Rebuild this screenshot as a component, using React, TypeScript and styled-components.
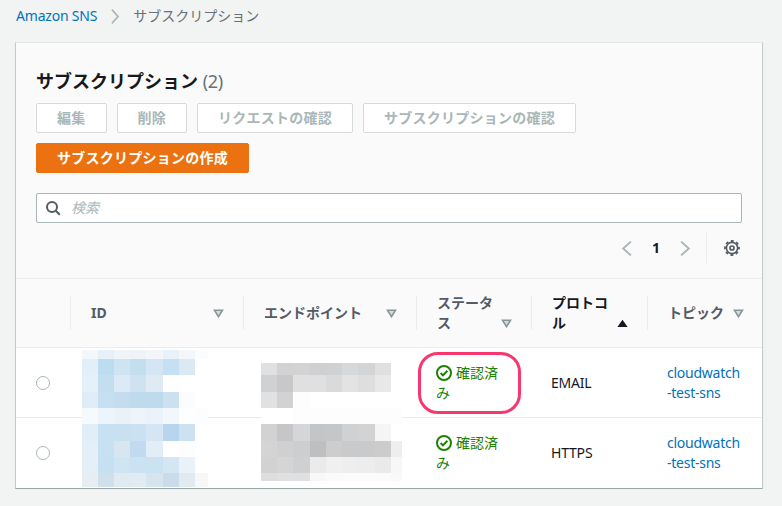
import { createGlobalStyle, styled } from 'styled-components'

const GlobalStyle = createGlobalStyle`
  html, body {
    margin: 0;
    padding: 0;
    background: #f2f3f3;
    font-family: "Noto Sans", "Noto Sans CJK JP", sans-serif;
    font-size: 14px;
    line-height: 20px;
    color: #16191f;
  }
`

const blueX = [82, 98, 114, 130, 146, 163, 179, 195, 208]
const blueRows = [
  { y: 350, h: 9, c: ['#f3f7fb', '#e8f0f7', '#eef4f8', '#edf3f7', '#f2f6fa', '#e8f1f8', '#f3f7fb', '#fbfcfd'] },
  { y: 359, h: 16, c: ['#e3eff8', '#bedcef', '#cfe4f2', '#c3deef', '#d4e5f3', '#c5e0f2', '#dbe9f4', '#fff'] },
  { y: 375, h: 17, c: ['#e6f0f8', '#c3deee', '#dce9f6', '#cee2f0', '#deebf5', '#fff', '#fff', '#fff'] },
  { y: 392, h: 16, c: ['#e0ecf8', '#c6e0f1', '#c4dcee', '#bedaed', '#bedaed', '#cbe1f0', '#fbfcfe', '#fff'] },
  { y: 408, h: 16, c: ['#f7fafd', '#eef4fb', '#eaf2f8', '#eef4f9', '#ebf2f9', '#f3f7fb', '#fdfeff', '#fdfdfd'] },
  { y: 424, h: 17, c: ['#e2eef7', '#c8e1f2', '#c9e0f0', '#cae1f1', '#d5e5f3', '#b7d5ec', '#cde2f1', '#fff'] },
  { y: 441, h: 16, c: ['#e4eff7', '#c8e1f2', '#d8e6f1', '#c2daef', '#e1edf7', '#fff', '#fcfdfd', '#fff'] },
  { y: 457, h: 16, c: ['#e4eff7', '#c6e0f1', '#cfe5f4', '#cbe2f2', '#cbe2f1', '#d4e6f3', '#e9f2f9', '#fff'] },
  { y: 473, h: 14, c: ['#e6edf3', '#cfe0ec', '#e0eaf1', '#e0ebf2', '#d6e4ee', '#cadcea', '#e1eaf0', '#f7f7f7'] }
]

const greyX = [261, 277, 293, 310, 326, 342, 358, 375, 391, 402]
const greyRows = [
  { y: 363, h: 12, c: ['#dfe0e2', '#d2d2d2', '#d3d3d3', '#d0d0d2', '#d0d1d3', '#d7d8da', '#d3d4d6', '#e0e0e0', '#fff'] },
  { y: 375, h: 17, c: ['#d0d1d3', '#c8c8ca', '#e0e0e0', '#dfe0e2', '#dadada', '#e3e3e3', '#dedede', '#e8e8e8', '#fff'] },
  { y: 392, h: 16, c: ['#e0e1e3', '#d2d2d2', '#fdfdfd', '#fff', '#fff', '#fff', '#fff', '#fff', '#fff'] },
  { y: 408, h: 16, c: ['#fff', '#fff', '#fdfdfd', '#fdfdfd', '#fdfdfd', '#fdfdfd', '#fdfdfd', '#fdfdfd', '#fdfdfd'] },
  { y: 424, h: 17, c: ['#d2d2d2', '#c6c6c8', '#d5d6d8', '#c4c5c7', '#c5c6c8', '#d0d1d3', '#d3d3d3', '#f5f5f5', '#fff'] },
  { y: 441, h: 16, c: ['#d4d4d4', '#cfd0d2', '#cdcecf', '#bebfc1', '#cdcdcd', '#c9cacc', '#c9cacc', '#cccccc', '#eeeeee'] },
  { y: 457, h: 16, c: ['#d2d2d2', '#d5d5d5', '#cfd0d2', '#ebebeb', '#f0f0f0', '#eeeeee', '#ededed', '#eaeaea', '#f7f7f7'] },
  { y: 473, h: 8, c: ['#dcdee0', '#dfe1e0', '#dfe0e2', '#f8f8f8', '#fafafa', '#fbfbfb', '#fbfbfb', '#fbfbfb', '#f9f9f9'] }
]

// table body starts at y=348 in the page
const BODY_TOP = 348

type Row = { y: number; h: number; c: string[] }

const Mosaic = ({ xs, rows, $left }: { xs: number[]; rows: Row[]; $left: number }) => {
  const width = xs[xs.length - 1] - xs[0]
  const top = rows[0].y
  const bottom = rows[rows.length - 1].y + rows[rows.length - 1].h
  return (
    <MosaicSvg
      $left={$left}
      $top={top - BODY_TOP}
      width={width}
      height={bottom - top}
      viewBox={`${xs[0]} ${top} ${width} ${bottom - top}`}
      shapeRendering="crispEdges"
    >
      {rows.map((r) =>
        r.c.map((fill, i) => (
          <rect key={`${r.y}-${i}`} x={xs[i]} y={r.y} width={xs[i + 1] - xs[i]} height={r.h} fill={fill} />
        ))
      )}
    </MosaicSvg>
  )
}

const Chevron = ({ dir, width = 9 }: { dir: 'left' | 'right'; width?: number }) => (
  <svg width={width} height="15" viewBox="0 0 9 15" preserveAspectRatio="none" fill="none" stroke="#aab7b8" strokeWidth="1.8">
    <path d={dir === 'right' ? 'M1 .7 8 7.5 1 14.3' : 'M8 .7 1 7.5 8 14.3'} />
  </svg>
)

const SortCaret = () => (
  <CaretIcon width="11" height="9" viewBox="0 0 11 9">
    <path d="M1.5 1.2h8L5.5 7.6z" fill="#d5dbdb" stroke="#879596" strokeWidth="1.6" strokeLinejoin="miter" />
  </CaretIcon>
)

const SortActive = () => (
  <CaretIcon width="11" height="9" viewBox="0 0 11 9">
    <path d="M5.5.8 10.6 8H.4z" fill="#16191f" />
  </CaretIcon>
)

const SearchIcon = () => (
  <svg width="16" height="16" viewBox="0 0 16 16" fill="none" stroke="#545b64" strokeWidth="2">
    <circle cx="7" cy="7" r="5" />
    <path d="m10.8 10.8 4 4" />
  </svg>
)

const GearIcon = () => (
  <svg width="16" height="16" viewBox="0 0 16 16" fill="none" stroke="#545b64">
    <circle cx="8" cy="8" r="7" strokeWidth="1.8" strokeDasharray="2.9 2.6" strokeDashoffset="1.45" />
    <circle cx="8" cy="8" r="5.6" strokeWidth="1.6" />
    <circle cx="8" cy="8" r="2" strokeWidth="1.7" />
  </svg>
)

const CheckIcon = () => (
  <StatusIcon width="16" height="16" viewBox="0 0 16 16" fill="none" stroke="#1d8102" strokeWidth="2">
    <circle cx="8" cy="8" r="7" />
    <path d="m4.6 8 2.4 2.4 4.4-4.6" />
  </StatusIcon>
)

const columns = [
  { key: 'id', label: 'ID' },
  { key: 'endpoint', label: 'エンドポイント' },
  { key: 'status', label: 'ステータス' },
  { key: 'protocol', label: 'プロトコル', active: true },
  { key: 'topic', label: 'トピック' }
]

const rows = [
  { protocol: 'EMAIL', highlighted: true },
  { protocol: 'HTTPS', highlighted: false }
]

export default function App() {
  return (
    <>
      <GlobalStyle />
      <Breadcrumb>
        <CrumbLink>Amazon SNS</CrumbLink>
        <Chevron dir="right" width={8} />
        <CrumbCurrent>サブスクリプション</CrumbCurrent>
      </Breadcrumb>
      <Card>
        <CardHeader>
          <Title>
            サブスクリプション <Count>(2)</Count>
          </Title>
          <Actions>
            <DisabledButton>編集</DisabledButton>
            <DisabledButton>削除</DisabledButton>
            <DisabledButton>リクエストの確認</DisabledButton>
            <DisabledButton>サブスクリプションの確認</DisabledButton>
            <PrimaryButton>サブスクリプションの作成</PrimaryButton>
          </Actions>
          <SearchBox>
            <SearchIcon />
            <SearchHint>検索</SearchHint>
          </SearchBox>
          <Pager>
            <PagerButton>
              <Chevron dir="left" width={10} />
            </PagerButton>
            <PageNumber>1</PageNumber>
            <PagerButton>
              <Chevron dir="right" width={10} />
            </PagerButton>
            <PagerDivider />
            <GearIcon />
          </Pager>
        </CardHeader>
        <HeadRow>
          <HeadCell />
          {columns.map((col) => (
            <HeadCell key={col.key}>
              <HeadInner $active={col.active}>
                <HeadLabel>{col.label}</HeadLabel>
                {col.active ? <SortActive /> : <SortCaret />}
              </HeadInner>
            </HeadCell>
          ))}
        </HeadRow>
        <Body>
          {rows.map((row) => (
            <BodyRow key={row.protocol}>
              <RadioCell>
                <Radio />
              </RadioCell>
              <Cell />
              <Cell />
              <Cell $tight>
                <Status>
                  <CheckIcon />
                  確認済み
                </Status>
                {row.highlighted && <Highlight />}
              </Cell>
              <Cell $tight>
                <Latin>{row.protocol}</Latin>
              </Cell>
              <Cell $tight>
                <TopicLink>cloudwatch-test-sns</TopicLink>
              </Cell>
            </BodyRow>
          ))}
          <Mosaic xs={blueX} rows={blueRows} $left={blueX[0] - 16} />
          <Mosaic xs={greyX} rows={greyRows} $left={greyX[0] - 16} />
        </Body>
      </Card>
    </>
  )
}

const Breadcrumb = styled.nav`
  display: flex;
  align-items: center;
  height: 32px;
  padding-left: 16px;
  gap: 14px;
`

const CrumbLink = styled.a`
  color: #0073bb;
  letter-spacing: -0.2px;
`

const CrumbCurrent = styled.span`
  color: #687078;
`

const Card = styled.section`
  width: 746px;
  margin: 10px 0 0 15px;
  background: #fafafa;
  border: 1px solid #e4e7e7;
  border-left-color: #c6cccc;
  border-right-color: #c6cccc;
  border-bottom: 1px solid #98a5a6;
  box-shadow: 0 1px 1px rgba(0, 28, 36, 0.15);
`

const CardHeader = styled.header`
  padding: 24px 20px 15px;
  border-bottom: 1px solid #eaeded;
`

const Title = styled.h1`
  margin: 0 0 8px;
  font-size: 18px;
  line-height: 28px;
  font-weight: 700;
  color: #16191f;
`

const Count = styled.span`
  font-weight: 400;
  color: #687078;
  letter-spacing: -0.3px;
`

const Actions = styled.div`
  display: flex;
  flex-wrap: wrap;
  gap: 10px;
`

const DisabledButton = styled.button`
  height: 30px;
  padding: 0 20px;
  font: inherit;
  font-weight: 700;
  letter-spacing: 0.25px;
  color: #aab7b8;
  background: #fff;
  border: 1px solid #d5dbdb;
  border-radius: 2px;
`

const PrimaryButton = styled(DisabledButton)`
  color: #fff;
  background: #ec7211;
  border-color: #ec7211;
`

const SearchBox = styled.div`
  display: flex;
  align-items: center;
  gap: 10px;
  height: 30px;
  box-sizing: border-box;
  margin-top: 20px;
  padding-left: 8px;
  background: #fff;
  border: 1px solid #aab7b8;
  border-radius: 2px;
`

const SearchHint = styled.span`
  font-style: italic;
  color: #aab7b8;
`

const Pager = styled.div`
  display: flex;
  align-items: center;
  justify-content: flex-end;
  height: 30px;
  margin-top: 10px;
  padding-right: 2px;
`

const PagerButton = styled.span`
  display: flex;
  align-items: center;
  justify-content: center;
  width: 10px;
`

const PageNumber = styled.span`
  width: 48px;
  text-align: center;
  font-weight: 700;
`

const PagerDivider = styled.span`
  width: 1px;
  height: 30px;
  margin: 0 17px 0 16px;
  background: #eaeded;
`

const tableColumns = '54px 173px 173px 115px 116px 1fr'

const HeadRow = styled.div`
  display: grid;
  grid-template-columns: ${tableColumns};
  height: 68px;
  align-items: center;
  border-bottom: 1px solid #eaeded;
`

const HeadCell = styled.div`
  height: 34px;
  display: flex;
  align-items: center;
  padding: 0 20px;
  box-sizing: border-box;
  &:not(:first-child) {
    border-left: 1px solid #eaeded;
  }
  &:last-child {
    padding-right: 19px;
  }
`

const HeadInner = styled.div<{ $active?: boolean }>`
  flex: 1;
  min-width: 0;
  display: flex;
  align-items: flex-end;
  justify-content: space-between;
  font-weight: 700;
  color: ${(p) => (p.$active ? '#16191f' : '#545b64')};
`

const HeadLabel = styled.span`
  flex: 0 1 auto;
  min-width: 0;
  margin-right: -4px;
`

const CaretIcon = styled.svg`
  flex: none;
  margin-bottom: 5px;
  margin-right: -1px;
`

const Body = styled.div`
  position: relative;
  background: #fff;
`

const BodyRow = styled.div`
  display: grid;
  grid-template-columns: ${tableColumns};
  height: 70px;
  &:first-child {
    height: 69px;
    border-bottom: 1px solid #eaeded;
  }
`

const Cell = styled.div<{ $tight?: boolean }>`
  position: relative;
  display: flex;
  align-items: center;
  box-sizing: border-box;
  padding: 0 ${(p) => (p.$tight ? 20 : 0)}px;
  min-width: 0;
`

const RadioCell = styled(Cell)`
  justify-content: center;
  padding-right: 0;
  padding-left: 0;
`

const Radio = styled.span`
  width: 14px;
  height: 14px;
  box-sizing: border-box;
  border: 1px solid #aab7b8;
  border-radius: 50%;
  background: #fff;
`

const Status = styled.div`
  color: #1d8102;
`

const StatusIcon = styled.svg`
  vertical-align: -3px;
  margin-right: 4px;
`

const Highlight = styled.div`
  position: absolute;
  left: 2px;
  top: 4px;
  width: 103px;
  height: 62px;
  box-sizing: border-box;
  border: 3px solid #f9376f;
  border-radius: 20px;
`

const Latin = styled.span`
  letter-spacing: -0.2px;
`

const TopicLink = styled.a`
  color: #0073bb;
  word-break: break-all;
  letter-spacing: -0.25px;
`

const MosaicSvg = styled.svg<{ $left: number; $top: number }>`
  position: absolute;
  left: ${(p) => p.$left}px;
  top: ${(p) => p.$top}px;
`
